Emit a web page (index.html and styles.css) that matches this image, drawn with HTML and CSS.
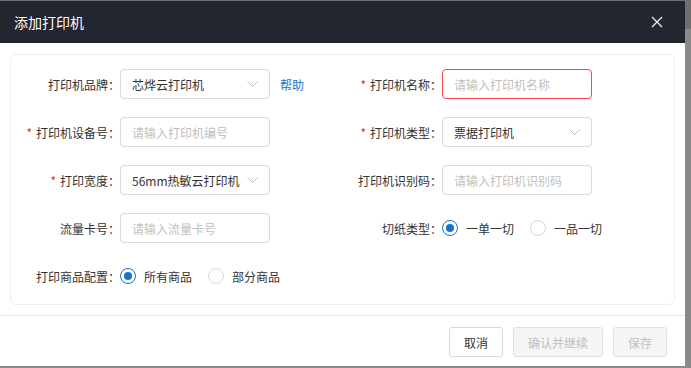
FILE: index.html
```html
<!DOCTYPE html>
<html lang="zh-CN">
<head>
    <meta charset="UTF-8">
    <title>添加打印机</title>
    <link rel="stylesheet" href="styles.css">
</head>
<body>
    <div class="modal">
        <div class="modal-header">
            <div class="modal-title">添加打印机</div>
            <button class="close-btn" aria-label="关闭">
                <svg width="12" height="12" viewBox="0 0 12 12"><path d="M1 1 L11 11 M11 1 L1 11" stroke="#e8e8ea" stroke-width="1.4" fill="none"/></svg>
            </button>
        </div>
        <div class="modal-body">
            <div class="form-card">
                <div class="form-grid">
                    <div class="field">
                        <label class="field-label">打印机品牌：</label>
                        <div class="select">
                            <span>芯烨云打印机</span>
                            <svg class="arrow" width="11" height="6" viewBox="0 0 11 6"><path d="M0.5 0.5 L5.5 5.5 L10.5 0.5" stroke="#bfbfbf" stroke-width="1" fill="none"/></svg>
                        </div>
                        <a class="help-link" href="#">帮助</a>
                    </div>
                    <div class="field">
                        <label class="field-label"><span class="star">*</span>打印机名称：</label>
                        <input class="input input-error" type="text" placeholder="请输入打印机名称">
                    </div>

                    <div class="field">
                        <label class="field-label"><span class="star">*</span>打印机设备号：</label>
                        <input class="input" type="text" placeholder="请输入打印机编号">
                    </div>
                    <div class="field">
                        <label class="field-label"><span class="star">*</span>打印机类型：</label>
                        <div class="select">
                            <span>票据打印机</span>
                            <svg class="arrow" width="11" height="6" viewBox="0 0 11 6"><path d="M0.5 0.5 L5.5 5.5 L10.5 0.5" stroke="#bfbfbf" stroke-width="1" fill="none"/></svg>
                        </div>
                    </div>

                    <div class="field">
                        <label class="field-label"><span class="star">*</span>打印宽度：</label>
                        <div class="select">
                            <span>56mm热敏云打印机</span>
                            <svg class="arrow" width="11" height="6" viewBox="0 0 11 6"><path d="M0.5 0.5 L5.5 5.5 L10.5 0.5" stroke="#bfbfbf" stroke-width="1" fill="none"/></svg>
                        </div>
                    </div>
                    <div class="field">
                        <label class="field-label">打印机识别码：</label>
                        <input class="input" type="text" placeholder="请输入打印机识别码">
                    </div>

                    <div class="field">
                        <label class="field-label">流量卡号：</label>
                        <input class="input" type="text" placeholder="请输入流量卡号">
                    </div>
                    <div class="field">
                        <label class="field-label">切纸类型：</label>
                        <div class="radio-group">
                            <span class="radio checked"><span class="dot"></span>一单一切</span>
                            <span class="radio"><span class="dot"></span>一品一切</span>
                        </div>
                    </div>

                    <div class="field">
                        <label class="field-label">打印商品配置：</label>
                        <div class="radio-group">
                            <span class="radio checked"><span class="dot"></span>所有商品</span>
                            <span class="radio"><span class="dot"></span>部分商品</span>
                        </div>
                    </div>
                </div>
            </div>
        </div>
        <div class="modal-footer">
            <button class="btn">取消</button>
            <button class="btn" disabled>确认并继续</button>
            <button class="btn" disabled>保存</button>
        </div>
    </div>
</body>
</html>
```

FILE: styles.css
```css
body {
    margin: 0;
    height: 368px;
    overflow: hidden;
    background: linear-gradient(#6f6f70 0, #6f6f70 29px, #8a8a8a 29px);
    font-family: "Noto Sans CJK SC", "Noto Sans", sans-serif;
    font-size: 12px;
    color: #333;
}
.modal {
    width: 685px;
    height: 365px;
    margin-top: 1px;
    background: #fff;
    display: flex;
    flex-direction: column;
}
.modal-header {
    height: 42px;
    background: #23252f;
    display: flex;
    align-items: center;
    justify-content: space-between;
    padding: 0 22px 0 14px;
}
.modal-title {
    color: #fff;
    font-size: 14px;
}
.close-btn {
    background: none;
    border: none;
    padding: 0;
    width: 12px;
    height: 12px;
    display: flex;
    cursor: pointer;
}
.modal-body {
    padding: 11px 10px 10px;
}
.form-card {
    border: 1px solid #ebedf0;
    border-radius: 6px;
    padding: 14px 9px 13px;
}
.form-grid {
    display: grid;
    grid-template-columns: 322px 322px;
    row-gap: 18px;
}
.field {
    display: flex;
    align-items: center;
    height: 30px;
}
.field-label {
    width: 100px;
    text-align: right;
    color: #333;
    white-space: nowrap;
}
.star {
    color: #f5222d;
    margin-right: 4px;
}
.input,
.select {
    width: 150px;
    height: 30px;
    box-sizing: border-box;
    border: 1px solid #d9d9d9;
    border-radius: 4px;
    padding: 0 11px;
    font-family: inherit;
    font-size: 12px;
    color: #333;
    outline: none;
}
.input::placeholder {
    color: #bfbfbf;
}
.input-error {
    border-color: #f5484f;
}
.select {
    display: flex;
    align-items: center;
    justify-content: space-between;
    white-space: nowrap;
}
.select span {
    overflow: hidden;
}
.arrow {
    flex-shrink: 0;
    margin-left: 6px;
}
.help-link {
    margin-left: 10px;
    color: #1a70c9;
    text-decoration: none;
}
.radio-group {
    display: flex;
    align-items: center;
}
.radio {
    display: flex;
    align-items: center;
    margin-right: 16px;
    color: #333;
}
.radio .dot {
    width: 16px;
    height: 16px;
    box-sizing: border-box;
    border: 1px solid #d9d9d9;
    border-radius: 50%;
    margin-right: 8px;
    display: flex;
    align-items: center;
    justify-content: center;
}
.radio.checked .dot {
    border-color: #1672d4;
}
.radio.checked .dot::after {
    content: "";
    width: 8px;
    height: 8px;
    border-radius: 50%;
    background: #1672d4;
}
.modal-footer {
    border-top: 1px solid #e8e8e8;
    display: flex;
    justify-content: flex-end;
    gap: 10px;
    padding: 11px 18px 9px;
}
.btn {
    height: 30px;
    padding: 0 14px;
    border: 1px solid #d9d9d9;
    border-radius: 3px;
    background: #fff;
    font-family: inherit;
    font-size: 12px;
    color: #333;
    cursor: pointer;
}
.btn:disabled {
    background: #f5f5f5;
    color: #c0c0c0;
    border-color: #e0e0e0;
    cursor: not-allowed;
}
```
